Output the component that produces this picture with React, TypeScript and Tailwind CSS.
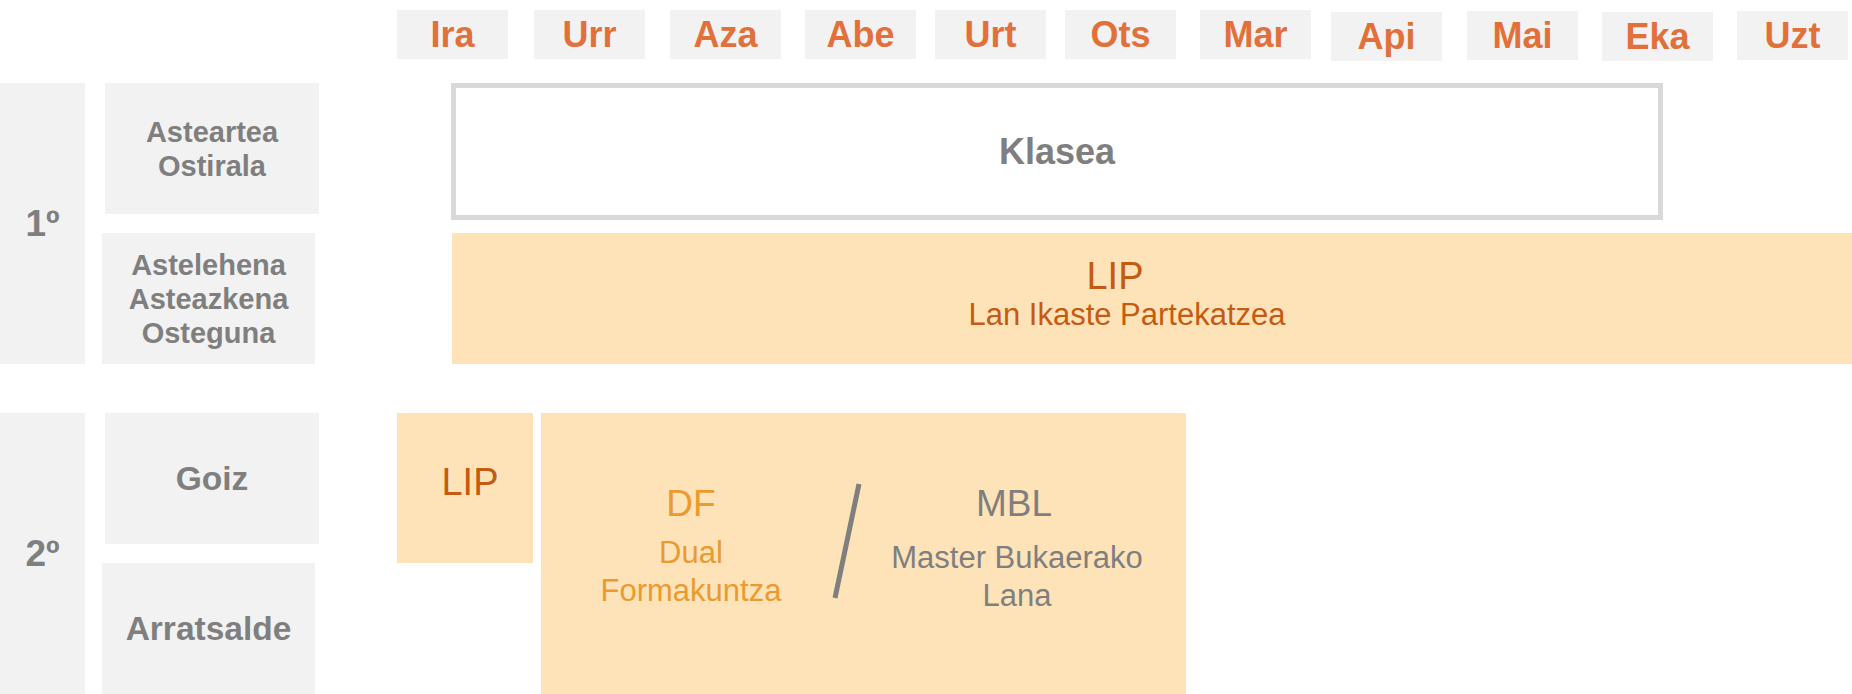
import React from 'react';

interface Month {
    label: string;
    offset: string;
}

// hilabeteak, goiburuan
const months: Month[] = [
    { label: 'Ira', offset: 'ml-0 mt-[10px]' },
    { label: 'Urr', offset: 'ml-[26px] mt-[10px]' },
    { label: 'Aza', offset: 'ml-[25px] mt-[10px]' },
    { label: 'Abe', offset: 'ml-[24px] mt-[10px]' },
    { label: 'Urt', offset: 'ml-[19px] mt-[10px]' },
    { label: 'Ots', offset: 'ml-[19px] mt-[10px]' },
    { label: 'Mar', offset: 'ml-[24px] mt-[10px]' },
    { label: 'Api', offset: 'ml-[20px] mt-[12px]' },
    { label: 'Mai', offset: 'ml-[25px] mt-[11px]' },
    { label: 'Eka', offset: 'ml-[24px] mt-[12px]' },
    { label: 'Uzt', offset: 'ml-[24px] mt-[11px]' },
];

function DayBox({ lines, className, big }: { lines: string[]; className: string; big?: boolean }) {
    return (
        <div className={`bg-[#f2f2f2] h-[131px] flex flex-col items-center justify-center text-[#7f7f7f] font-bold ${className}`}>
            {lines.map((line) => (
                <span key={line} className={big ? 'text-[33.5px] leading-[38px]' : 'text-[29px] leading-[34px]'}>
                    {line}
                </span>
            ))}
        </div>
    );
}

export default function App() {
    return (
        <div className="w-[1852px] h-[694px] overflow-hidden bg-white font-['Liberation_Sans',Arial,sans-serif]">
            {/* Goiburua */}
            <div className="flex items-start h-[83px] pl-[397px]">
                {months.map((m) => (
                    <div
                        key={m.label}
                        className={`w-[111px] h-[49px] shrink-0 bg-[#f2f2f2] flex items-center justify-center text-[36px] font-bold text-[#e2703a] ${m.offset}`}
                    >
                        {m.label}
                    </div>
                ))}
            </div>

            {/* 1º maila */}
            <div className="flex h-[281px]">
                <div className="w-[85px] shrink-0 bg-[#f2f2f2] flex items-center justify-center text-[37px] font-bold text-[#7f7f7f]">
                    1º
                </div>
                <div className="ml-[17px] w-[217px] shrink-0 flex flex-col gap-[19px]">
                    <DayBox lines={['Asteartea', 'Ostirala']} className="ml-[3px] w-[214px]" />
                    <DayBox lines={['Astelehena', 'Asteazkena', 'Osteguna']} className="w-[213px]" />
                </div>
                <div className="ml-[132px] flex-1 flex flex-col">
                    <div className="w-[1212px] h-[137px] border-[5px] border-[#d9d9d9] flex items-center justify-center text-[36px] font-bold text-[#7f7f7f]">
                        Klasea
                    </div>
                    <div className="mt-[13px] ml-[1px] h-[131px] bg-[#fee3b9] flex flex-col items-center justify-center pb-[8px] pr-[50px] text-[#c55a11]">
                        <span className="text-[38px] leading-[41px] pr-[24px]">LIP</span>
                        <span className="text-[31px] leading-[36px]">Lan Ikaste Partekatzea</span>
                    </div>
                </div>
            </div>

            {/* 2º maila */}
            <div className="flex h-[281px] mt-[49px]">
                <div className="w-[85px] shrink-0 bg-[#f2f2f2] flex items-center justify-center text-[37px] font-bold text-[#7f7f7f]">
                    2º
                </div>
                <div className="ml-[17px] w-[217px] shrink-0 flex flex-col gap-[19px]">
                    <DayBox lines={['Goiz']} className="ml-[3px] w-[214px]" big />
                    <DayBox lines={['Arratsalde']} className="w-[213px]" big />
                </div>
                <div className="ml-[78px] w-[136px] h-[150px] shrink-0 bg-[#fee3b9] flex items-center justify-center pb-[12px] pl-[10px] text-[38px] text-[#c55a11]">
                    LIP
                </div>
                <div className="ml-[8px] w-[645px] shrink-0 bg-[#fee3b9] grid grid-cols-[300px_24px_304px] items-start pt-[70px]">
                    <div className="flex flex-col items-center text-[#eb9a2e]">
                        <span className="text-[37px] leading-[41px]">DF</span>
                        <span className="mt-[10px] text-[31px] leading-[38px]">Dual</span>
                        <span className="text-[31px] leading-[38px]">Formakuntza</span>
                    </div>
                    <svg width="24" height="114" className="overflow-visible mt-[1px]">
                        <line x1="18" y1="0" x2="-6" y2="114" stroke="#7f7f7f" strokeWidth="5" />
                    </svg>
                    <div className="flex flex-col items-center text-[#7f7f7f]">
                        <span className="text-[37px] leading-[41px] pr-[6px]">MBL</span>
                        <span className="mt-[15px] text-[31px] leading-[38px]">Master Bukaerako</span>
                        <span className="text-[31px] leading-[38px]">Lana</span>
                    </div>
                </div>
            </div>
        </div>
    );
}
